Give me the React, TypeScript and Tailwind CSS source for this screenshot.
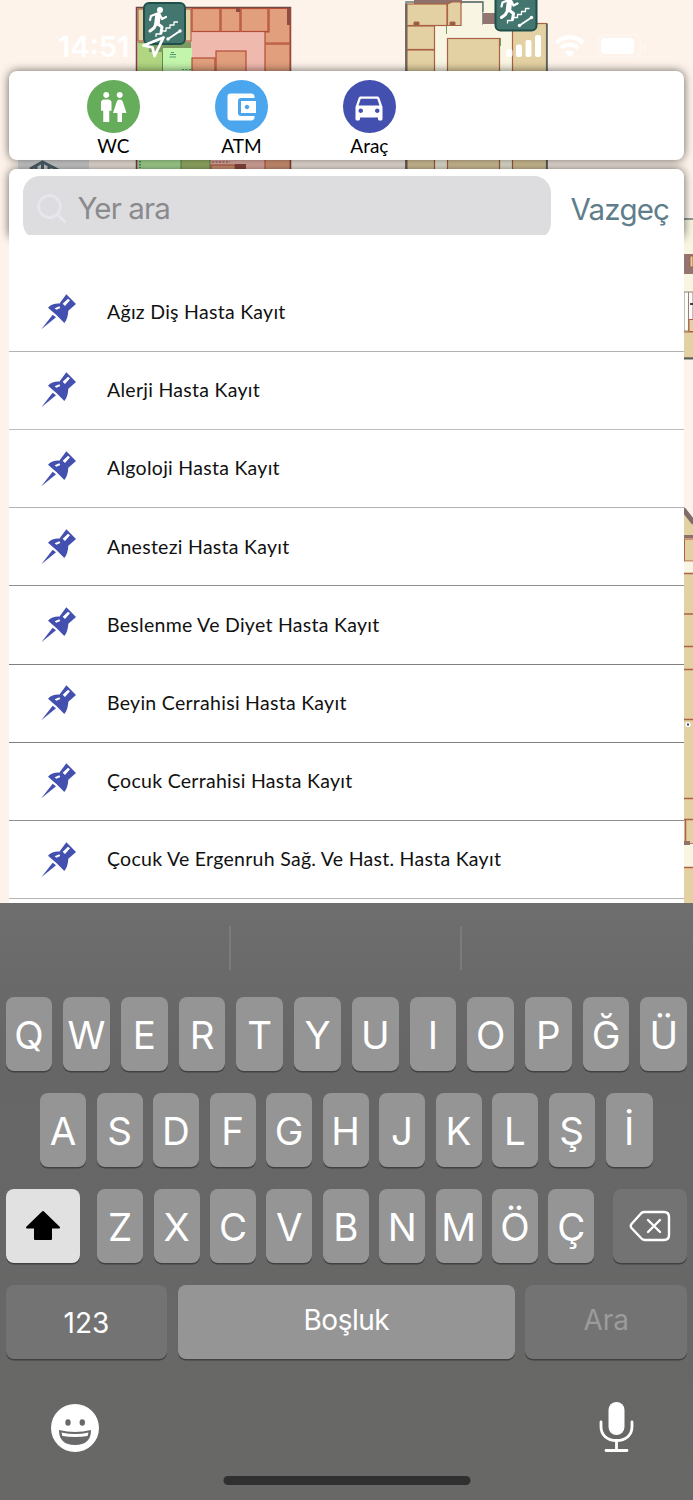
import React from 'react';
import { MdAccountBalanceWallet, MdDirectionsCar, MdWc } from 'react-icons/md';

const categories = [
  { label: 'WC', icon: MdWc, color: 'bg-[#66ad5b]' },
  { label: 'ATM', icon: MdAccountBalanceWallet, color: 'bg-[#4ba6ee]' },
  { label: 'Araç', icon: MdDirectionsCar, color: 'bg-[#4350af]' },
];

const places = [
  { name: 'Ağız Diş Hasta Kayıt', line: 'border-[#b3b3b3]' },
  { name: 'Alerji Hasta Kayıt', line: 'border-[#bdbdbd]' },
  { name: 'Algoloji Hasta Kayıt', line: 'border-[#b3b3b3]' },
  { name: 'Anestezi Hasta Kayıt', line: 'border-[#8f8f8f]' },
  { name: 'Beslenme Ve Diyet Hasta Kayıt', line: 'border-[#808080]' },
  { name: 'Beyin Cerrahisi Hasta Kayıt', line: 'border-[#808080]' },
  { name: 'Çocuk Cerrahisi Hasta Kayıt', line: 'border-[#8f8f8f]' },
  { name: 'Çocuk Ve Ergenruh Sağ. Ve Hast. Hasta Kayıt', line: 'border-[#b3b3b3]' },
];

const topRow = ['Q', 'W', 'E', 'R', 'T', 'Y', 'U', 'I', 'O', 'P', 'Ğ', 'Ü'];
const middleRow = ['A', 'S', 'D', 'F', 'G', 'H', 'J', 'K', 'L', 'Ş'];
const bottomRow = ['Z', 'X', 'C', 'V', 'B', 'N', 'M', 'Ö', 'Ç'];

function StairsSign({ x, y }: { x: number; y: number }) {
  return (
    <g transform={`translate(${x} ${y})`}>
      <rect x="1" y="1" width="41" height="41" rx="5" fill="#42766e" stroke="#1f4f4a" strokeWidth="2" />
      <circle cx="17" cy="8" r="3" fill="#fff" />
      <g fill="none" stroke="#fff" strokeLinecap="round" strokeLinejoin="round">
        <path d="M15 13 L14 21" strokeWidth="5.5" />
        <path d="M13 12 L8 14 L7 18 M17 13 L19 17 L23 15" strokeWidth="2.2" />
        <path d="M15 22 L19 25 L18 31 M13 22 L11 26 L7 29" strokeWidth="3" />
        <path d="M13 35 V32 H18 V29 H23 V26 H27 V23 H31 V20 H35" strokeWidth="1.3" strokeLinecap="butt" />
        <path d="M25 37 L37 29" strokeWidth="2" />
      </g>
      <circle cx="25" cy="37" r="1.7" fill="#fff" />
      <circle cx="37" cy="29" r="1.7" fill="#fff" />
    </g>
  );
}

function FloorMap() {
  return (
    <svg className="absolute inset-0" width="693" height="903" viewBox="0 0 693 903">
      <rect width="693" height="903" fill="#fdf3ea" />

      {/* west building */}
      <rect x="136.5" y="7.5" width="154" height="170" fill="#f0b9ae" stroke="#6d4a45" strokeWidth="1.5" />
      <rect x="138" y="9" width="53" height="32" fill="#e5d2a2" stroke="#a6553d" />
      <rect x="138" y="42" width="53" height="28" fill="#7c9c62" />
      <path d="M138 43 H149 V52 H162 V72 H138 Z" fill="#b1d681" />
      <rect x="163" y="48" width="29" height="26" fill="#c4f5ad" />
      <path d="M162.500 52 V72" stroke="#628b4e" />
      <g stroke="#4b9b73" strokeWidth="1.2">
        <path d="M170 54.500 H176 M169.500 57 H176 M171 52.500 H174" />
        <path d="M182 69.500 H191" strokeDasharray="2 1.500" />
      </g>
      <g fill="#e19f7d" stroke="#b34e38" strokeWidth="1.2">
        <rect x="192" y="8.500" width="28" height="23" />
        <rect x="221" y="8.500" width="19" height="23" />
        <rect x="241" y="8.500" width="27" height="23" />
        <path d="M269 8.500 H290 V43 H265 V32 H269 Z" />
        <rect x="265" y="44" width="25" height="30" />
        <rect x="192" y="58" width="23" height="16" />
        <rect x="216" y="51" width="30" height="23" />
      </g>
      <rect x="287" y="8" width="3" height="17" fill="#924a43" />
      <rect x="236" y="8" width="4" height="4" fill="#924a43" />
      <rect x="138" y="155" width="43" height="20" fill="#b1e79d" />
      <path d="M140 161 V168" stroke="#4b9b73" strokeWidth="2" strokeDasharray="1.500 1.500" />
      <rect x="181" y="155" width="29" height="20" fill="#a4bd70" stroke="#628b4e" />
      <rect x="211" y="165" width="24" height="9" fill="#e19f7d" stroke="#b34e38" />
      <rect x="235" y="164" width="11" height="9" fill="#924a43" />
      <path d="M212 162 H230" stroke="#924a43" strokeDasharray="2 1.500" />
      <rect x="265" y="155" width="25" height="20" fill="#e19f7d" stroke="#b34e38" />

      {/* east building */}
      <path d="M406 2 H483 V24 H547 V180 H406 Z" fill="#f8f6e2" stroke="#687b78" strokeWidth="1.5" />
      <rect x="483" y="0" width="14" height="26" fill="#f8f6e2" />
      <rect x="414" y="0" width="48" height="4" fill="#8f706b" />
      <path d="M462 2 H483 V12" fill="none" stroke="#687b78" strokeWidth="1.5" />
      <rect x="483" y="13" width="14" height="11" fill="#927570" />
      <g fill="#e4d1a3" stroke="#a96243" strokeWidth="1.2">
        <rect x="407" y="4" width="40" height="21.500" />
        <path d="M447.500 4 L452 2 H461 V25.500 H447.500 Z" />
        <rect x="407" y="26" width="27.500" height="23.500" />
        <rect x="407" y="50" width="27.500" height="125" />
        <rect x="447.500" y="38.500" width="52" height="140" />
        <rect x="512.500" y="23.500" width="34" height="155" />
      </g>
      <path d="M414 25 V22 H419 V25 M450 25 V22 H455 V25" fill="#8f5d50" stroke="#a96243" />
      <path d="M546.800 24 V180 M406 4 V180" stroke="#5b6562" strokeWidth="1.5" />
      <path d="M446.500 26 V34 M500.500 38 V46" stroke="#779b65" />

      {/* facility card peeking out under the panels */}
      <rect x="18" y="150" width="71" height="60" fill="#dedede" />
      <path d="M30 169 L42.500 162 L62 172 M36 172 V166 M42.500 172 V163 M49 172 V166" fill="none" stroke="#536772" strokeWidth="3" />

      {/* edge of the south building */}
      <rect x="680" y="219" width="20" height="139" fill="#f8f6e2" />
      <path d="M680 219 H693" stroke="#687b78" strokeWidth="1.5" />
      <rect x="684" y="254" width="9" height="20" fill="#927570" />
      <rect x="690" y="256" width="3" height="11" fill="#e4d1a3" stroke="#a96243" />
      <rect x="684" y="292" width="9" height="39" fill="#fdfdf8" stroke="#8f8073" />
      <path d="M688.500 292 V331" stroke="#a07a80" />
      <path d="M690 304 H693" stroke="#39424e" strokeWidth="2" />
      <rect x="689" y="319.500" width="8" height="12" fill="#e4d1a3" stroke="#a96243" />
      <rect x="680" y="332" width="20" height="26" fill="#e4d1a3" stroke="#a96243" />
      <path d="M680 358.500 H693" stroke="#56605f" strokeWidth="2" />
      <path d="M684 507 L693 519 V903 H684 Z" fill="#e4d1a3" />
      <path d="M683 509 L694 523" stroke="#806c68" strokeWidth="5" />
      <path d="M684 536.500 H693" stroke="#8f706b" strokeWidth="3" />
      <rect x="684.500" y="539" width="12" height="22" fill="#e4d1a3" stroke="#a96243" />
      <rect x="684" y="561.500" width="9" height="12" fill="#f8f6e2" />
      <path d="M684 573.500 H693 M684 614 H693 M684 646.500 H693 M684 669.500 H693 M684 719.500 H693 M684 798.500 H693 M684 819.500 H693" stroke="#a96243" strokeWidth="1.600" />
      <ellipse cx="688" cy="724.500" rx="2.600" ry="2.600" fill="#fff" />
      <path d="M687 724.500 H689" stroke="#39424e" strokeWidth="2" />
      <path d="M685.500 820 V844 H693" fill="none" stroke="#a96243" strokeWidth="1.500" />
      <rect x="684" y="844" width="9" height="23" fill="#f8f6e2" />
      <rect x="684" y="841" width="6" height="4" fill="#8f706b" />
      <path d="M684 867.500 H693" stroke="#a96243" strokeWidth="1.500" />

      <StairsSign x={143} y={2} />
      <StairsSign x={494.5} y={-11.5} />
    </svg>
  );
}

function StatusBar() {
  return (
    <div className="relative flex h-[71px] pt-[34px] text-white">
      <span className="ml-[58px] w-[84px] text-[29px] leading-[26px] font-semibold">14:51</span>
      <svg width="24" height="24" viewBox="0 0 24 24" className="mt-px">
        <path d="M1.500 10.500 L21.500 2.500 L12.500 21 L10.500 12.500 Z" fill="none" stroke="#fff" strokeWidth="2.800" strokeLinejoin="round" />
      </svg>
      <svg width="146" height="26" viewBox="0 0 146 26" className="ml-[340px] shrink-0">
        <g fill="#fff">
          <rect x="0.500" y="15" width="6" height="8" rx="2" />
          <rect x="10" y="10.500" width="6" height="12.500" rx="2" />
          <rect x="19.500" y="6" width="6" height="17" rx="2" />
          <rect x="29" y="1" width="6" height="22" rx="2" />
          <path d="M63.700 16.500 c2 0 3.600 .7 4.900 1.800 l-4.900 4.900 -4.900 -4.900 c1.300 -1.100 2.900 -1.800 4.900 -1.800z" />
          <rect x="95" y="4" width="33" height="16" rx="4" />
          <path d="M138 9 v7 c3 -1 3 -6 0 -7z" opacity="0.5" />
        </g>
        <path d="M50.300 8.700 a19.500 19.500 0 0 1 26.800 0 M55.100 14 a12.500 12.500 0 0 1 17.200 0" fill="none" stroke="#fff" strokeWidth="4.200" />
        <rect x="92" y="1" width="43" height="22" rx="7" fill="none" stroke="#fff" strokeWidth="1.500" opacity="0.4" />
      </svg>
    </div>
  );
}

function PinIcon() {
  return (
    <svg width="37" height="37" viewBox="0 0 111 111" fill="#4350af">
      <path d="M79 4 L108 33 L85 53 C84 68 81 80 73 90 L50 67 L24 44 C32 35 46 31 58 32 Z" />
      <path d="M4 109 L38 65 L48 73 Z" />
      <path d="M84 17 L90 22 L75 39 L68 32 Z M44 46 L58 40 L61 45 L49 50 Z" fill="#fff" />
    </svg>
  );
}

function SearchPanel() {
  return (
    <div className="relative mx-[9px] mt-[9px] h-[734px] shrink-0">
      <div className="absolute inset-x-0 top-0 h-[70px] rounded-lg shadow-[0_0_10px_rgba(0,0,0,0.6)]" />
      <div className="relative h-full rounded-t-lg bg-white">
        <div className="flex h-[104.6px] items-start pt-[7px] pl-[14px]">
          <div className="h-[59px] w-[527.5px] overflow-hidden">
            <div className="flex h-[64px] items-center rounded-[17px] bg-[#dddde0] pt-px pl-[13px]">
              <svg width="32" height="32" viewBox="0 0 32 32" fill="none" stroke="#e6e6ee" strokeWidth="2.600" strokeLinecap="round">
                <circle cx="13.500" cy="13.500" r="11" />
                <path d="M22 22 L29 29" />
              </svg>
              <span className="ml-[9.5px] text-[29.5px] tracking-[-0.9px] text-[#8a8a8e]">Yer ara</span>
            </div>
          </div>
          <button className="ml-[20px] h-[66px] text-[29.5px] tracking-[-0.8px] text-[#607d8b]">Vazgeç</button>
        </div>
        <ul>
          {places.map((place) => (
            <li key={place.name} className={`flex h-[78.2px] items-center border-b pb-px pl-[31px] ${place.line}`}>
              <PinIcon />
              <span className="ml-[30px] font-['Lato',sans-serif] text-[19.5px] tracking-[0.28px] text-[#111]">{place.name}</span>
            </li>
          ))}
        </ul>
      </div>
    </div>
  );
}

const keyShape = 'flex h-[74.5px] items-center justify-center rounded-[8px] shadow-[0_1.5px_0_#414141]';

function Key({ label, className = '' }: { label: string; className?: string }) {
  return (
    <button className={`${keyShape} bg-[#959595] pt-[4px] text-[38.5px] font-normal ${className}`}>
      {label}
    </button>
  );
}

function Keyboard() {
  return (
    <div className="relative flex h-[597px] flex-col bg-linear-to-b from-[#6e6e6e] via-[#666666] via-25% to-[#686867] text-white">
      <div className="grid h-[93.8px] grid-cols-3 pt-[23px]">
        <div className="h-[44px] border-r-2 border-[#7b7b7b]" />
        <div className="h-[44px] border-r-2 border-[#7b7b7b]" />
      </div>
      <div className="flex flex-col gap-[21.5px] pr-[5.8px] pl-[5.5px]">
        <div className="grid grid-cols-12 gap-[11px]">
          {topRow.map((letter) => (
            <Key key={letter} label={letter} />
          ))}
        </div>
        <div className="flex gap-[10.5px] pl-[34.5px]">
          {middleRow.map((letter) => (
            <Key key={letter} label={letter} className="w-[46px]" />
          ))}
          <Key label="İ" className="ml-[1px] w-[46.5px]" />
        </div>
        <div className="flex">
          <button className={`${keyShape} w-[74px] bg-[#e1e1e1]`}>
            <svg width="36" height="32" viewBox="0 0 36 32">
              <path d="M18 2 L34 17.500 H26 V29 H10 V17.500 H2 Z" fill="#000" stroke="#000" strokeWidth="2" strokeLinejoin="round" />
            </svg>
          </button>
          <div className="ml-[17.7px] flex gap-[10.4px]">
            {bottomRow.map((letter) => (
              <Key key={letter} label={letter} className="w-[46px]" />
            ))}
          </div>
          <button className={`${keyShape} ml-auto w-[74px] bg-[#737373]`}>
            <svg width="42" height="32" viewBox="0 0 42 32" fill="none" stroke="#fff" strokeWidth="2.400" strokeLinecap="round" strokeLinejoin="round">
              <path d="M15 2 H35 Q40 2 40 7 V25 Q40 30 35 30 H16 Q14 30 12.500 28.500 L2.500 18 Q1 16 2.500 14 L11.500 4 Q13 2 15 2 Z" />
              <path d="M19 10 L31 22 M31 10 L19 22" />
            </svg>
          </button>
        </div>
        <div className="flex gap-[10.4px] text-[28px]">
          <button className={`${keyShape} w-[162px] bg-[#737373] pt-px`}>123</button>
          <button className={`${keyShape} w-[337px] bg-[#959595] pb-[4px] tracking-[-0.5px]`}>Boşluk</button>
          <button className={`${keyShape} w-[162px] bg-[#737373] pb-[4px] text-[#9b9b9b]`}>Ara</button>
        </div>
      </div>
      <div className="mt-[42px] flex items-start justify-between pr-[59px] pl-[51px]">
        <svg width="48" height="48" viewBox="0 0 48 48" className="mt-[3px]">
          <circle cx="24" cy="24" r="24" fill="#fff" />
          <g fill="#696969">
            <ellipse cx="17" cy="18.500" rx="2.700" ry="3.300" />
            <ellipse cx="31.300" cy="18.500" rx="2.700" ry="3.300" />
            <path d="M8 26 Q24 30 40 26 Q40 41 24 41 Q8 41 8 26 Z" />
          </g>
          <path d="M10.500 28.500 Q24 31.500 37.500 28.500 Q37 31 36.500 32 Q24 34 11.500 32 Q11 31 10.500 28.500 Z" fill="#fff" />
        </svg>
        <svg width="36" height="52" viewBox="0 0 36 52" fill="none" stroke="#fff" strokeWidth="2.800" strokeLinecap="round">
          <rect x="10.500" y="1" width="16" height="33" rx="8" fill="#fff" stroke="none" />
          <path d="M3 21 V25.500 C3 34 9 39.500 18.500 39.500 C28 39.500 34 34 34 25.500 V21 M18.500 40 V49 M8 49.500 H29" />
        </svg>
      </div>
      <div className="absolute bottom-[15px] left-1/2 h-[9px] w-[247px] -translate-x-1/2 rounded-full bg-[#303030]" />
    </div>
  );
}

export default function App() {
  return (
    <div className="relative flex h-[1500px] w-[693px] flex-col overflow-hidden bg-[#fdf3ea] font-['Inter',sans-serif]">
      <FloorMap />
      <StatusBar />
      <div className="relative mx-[9px] flex h-[89px] shrink-0 rounded-lg bg-white pl-[40.4px] shadow-[0_0_10px_rgba(0,0,0,0.6)]">
        {categories.map(({ label, icon: Icon, color }) => (
          <div key={label} className="flex w-[128px] flex-col items-center pt-[9px]">
            <div className={`flex size-[53px] items-center justify-center rounded-full ${color}`}>
              <Icon size={36} color="#fff" />
            </div>
            <span className="font-['Lato',sans-serif] text-[19px] leading-[26px] text-black">{label}</span>
          </div>
        ))}
      </div>
      <SearchPanel />
      <Keyboard />
    </div>
  );
}
